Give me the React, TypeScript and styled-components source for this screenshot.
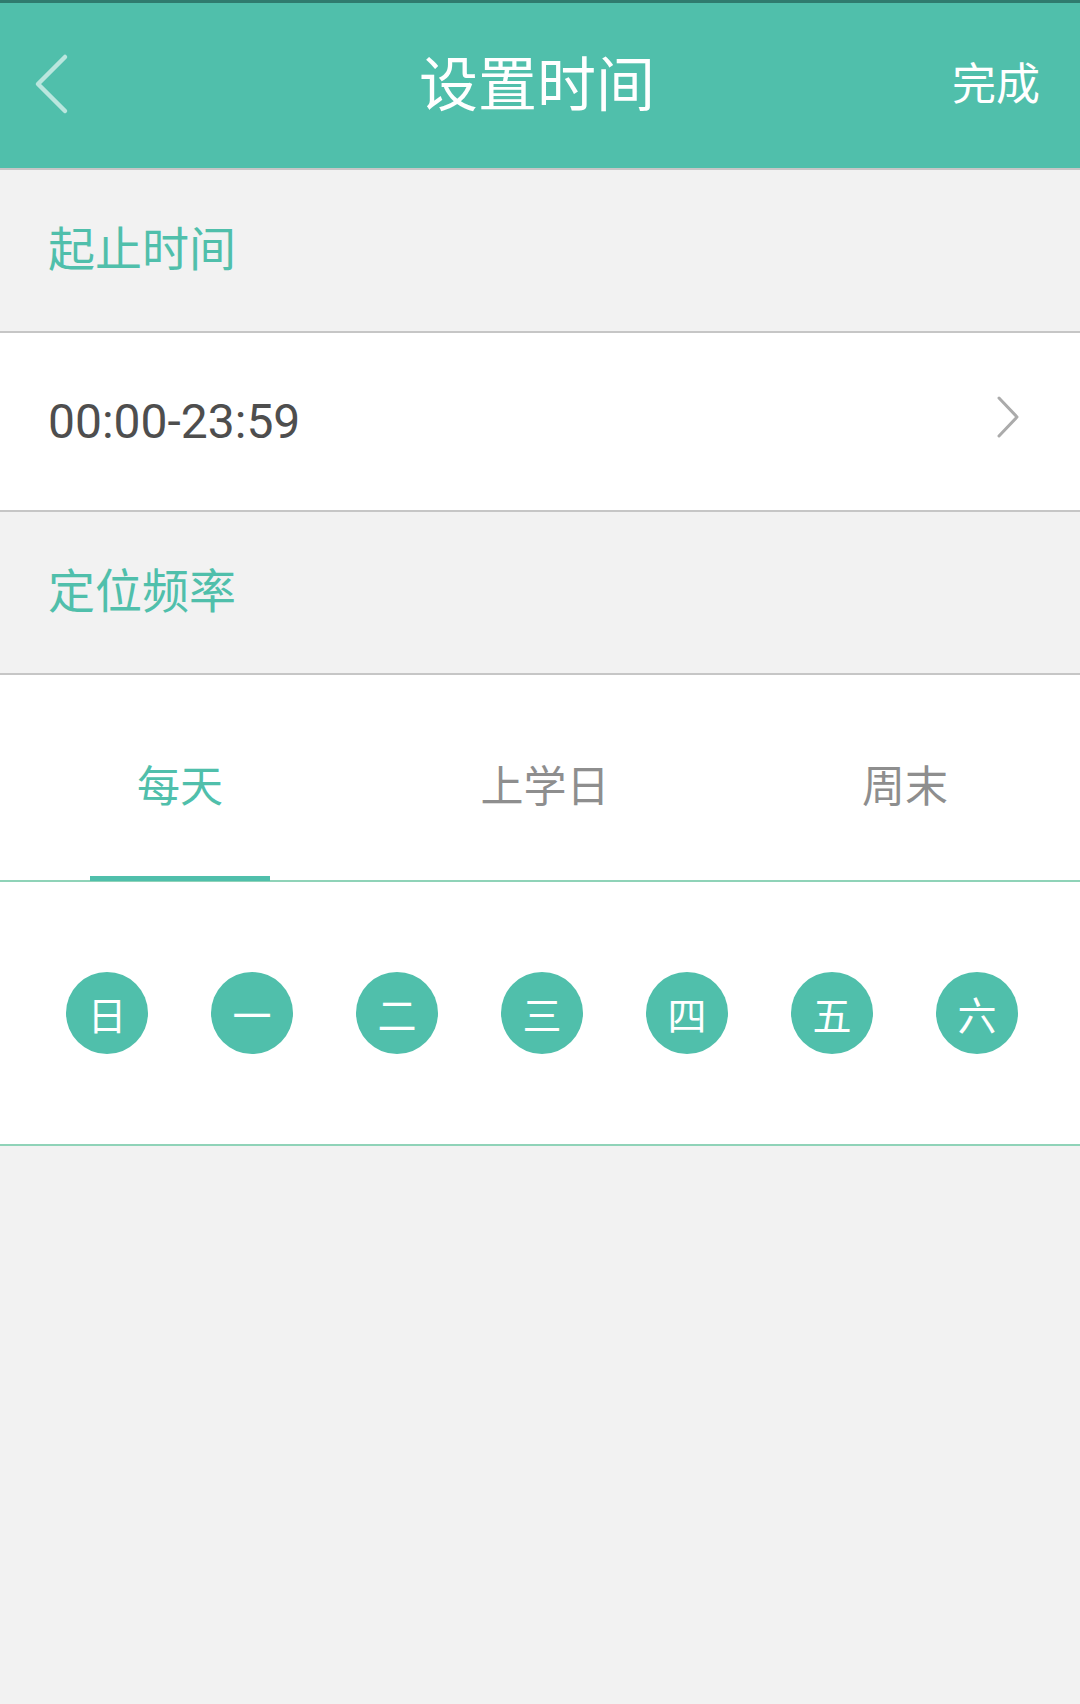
import React, { useState } from "react";
import styled, { createGlobalStyle } from "styled-components";

const teal = "#50bfab";
const lineGrey = "#c6c6c6";
const lineGreen = "#8fd3b8";

const GlobalStyle = createGlobalStyle`
  html, body {
    margin: 0;
    padding: 0;
    background: #f2f2f2;
  }

  body {
    font-family: "Noto Sans CJK SC", "Noto Sans", sans-serif;
  }
`;

const Page = styled.div`
  width: 1080px;
  min-height: 1704px;
  background: #f2f2f2;
`;

const StatusEdge = styled.div`
  height: 3px;
  background: #2f7b6e;
`;

const Header = styled.header`
  box-sizing: border-box;
  height: 167px;
  background: ${teal};
  border-bottom: 2px solid ${lineGrey};
  display: grid;
  grid-template-columns: 1fr auto 1fr;
  align-items: center;
  padding: 0 40px 10px 34px;
`;

const BackButton = styled.button`
  justify-self: start;
  background: none;
  border: none;
  padding: 0;
  width: 36px;
  height: 62px;
  margin-top: 6px;
  cursor: pointer;
  display: flex;
`;

const Title = styled.h1`
  margin: 0;
  font-size: 59px;
  font-weight: 400;
  color: #fff;
  line-height: 1;
`;

const DoneButton = styled.button`
  justify-self: end;
  background: none;
  border: none;
  padding: 0;
  font-family: inherit;
  font-size: 44px;
  color: #fff;
  line-height: 1;
  cursor: pointer;
`;

const SectionLabel = styled.div`
  box-sizing: border-box;
  height: 163px;
  display: flex;
  align-items: center;
  padding: 0 0 10px 48px;
  font-size: 47px;
  color: ${teal};
  border-bottom: 2px solid ${lineGrey};
`;

const TimeRow = styled.div`
  height: 177px;
  background: #fff;
  display: flex;
  align-items: center;
  justify-content: space-between;
  padding: 0 58px 0 48px;
  border-bottom: 2px solid ${lineGrey};
`;

const TimeText = styled.span`
  font-family: Roboto, "Noto Sans", sans-serif;
  font-size: 48px;
  color: #4e4e4e;
  line-height: 1;
`;

const Chevron = styled.svg`
  margin: 0 2px 10px 0;
`;

const Tabs = styled.div`
  height: 205px;
  background: #fff;
  display: grid;
  grid-template-columns: 360px 370px 350px;
  border-bottom: 2px solid ${lineGreen};
`;

const Tab = styled.div<{ $active?: boolean }>`
  position: relative;
  display: flex;
  align-items: center;
  justify-content: center;
  padding-top: 10px;
  font-size: 43px;
  color: ${(p) => (p.$active ? teal : "#8e8e8e")};
  cursor: pointer;

  &::after {
    content: "";
    display: ${(p) => (p.$active ? "block" : "none")};
    position: absolute;
    left: 90px;
    width: 180px;
    bottom: -1px;
    height: 5px;
    background: ${teal};
  }
`;

const DaysRow = styled.div`
  height: 262px;
  background: #fff;
  display: flex;
  align-items: center;
  gap: 63px;
  padding-left: 66px;
  border-bottom: 2px solid ${lineGreen};
`;

const Day = styled.div`
  width: 82px;
  height: 82px;
  border-radius: 50%;
  background: ${teal};
  color: #fff;
  font-size: 39px;
  display: flex;
  align-items: center;
  justify-content: center;
  line-height: 1;
`;

const tabs = ["每天", "上学日", "周末"];
const days = ["日", "一", "二", "三", "四", "五", "六"];

export default function App() {
  const [active, setActive] = useState(0);

  return (
    <Page>
      <GlobalStyle />
      <StatusEdge />
      <Header>
        <BackButton aria-label="返回">
          <svg width="36" height="62" viewBox="0 0 36 62">
            <path
              d="M31 4 L4 31 L31 58"
              fill="none"
              stroke="#bae6de"
              strokeWidth="4.5"
              strokeLinecap="round"
              strokeLinejoin="round"
            />
          </svg>
        </BackButton>
        <Title>设置时间</Title>
        <DoneButton>完成</DoneButton>
      </Header>

      <SectionLabel>起止时间</SectionLabel>
      <TimeRow>
        <TimeText>00:00-23:59</TimeText>
        <Chevron width="24" height="44" viewBox="0 0 24 44">
          <path
            d="M3 3 L21 22 L3 41"
            fill="none"
            stroke="#ababab"
            strokeWidth="3"
            strokeLinecap="round"
            strokeLinejoin="round"
          />
        </Chevron>
      </TimeRow>

      <SectionLabel>定位频率</SectionLabel>
      <Tabs>
        {tabs.map((t, i) => (
          <Tab key={t} $active={i === active} onClick={() => setActive(i)}>
            {t}
          </Tab>
        ))}
      </Tabs>

      <DaysRow>
        {days.map((d) => (
          <Day key={d}>{d}</Day>
        ))}
      </DaysRow>
    </Page>
  );
}
